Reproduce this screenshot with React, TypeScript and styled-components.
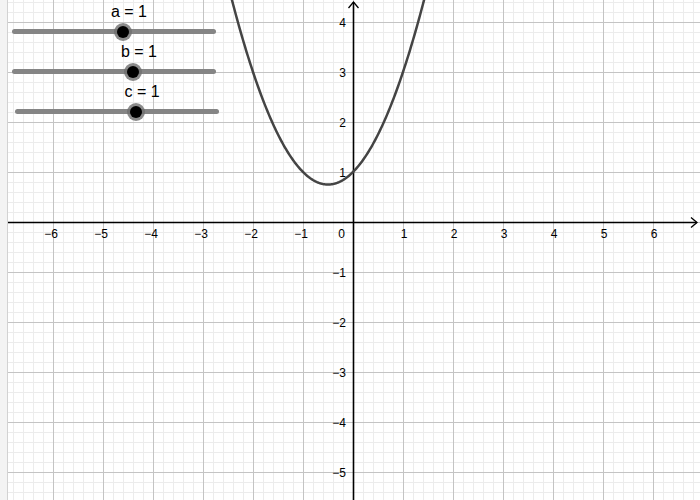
import React from "react";
import styled, { createGlobalStyle } from "styled-components";

// GeoGebra-style graphing view: y = ax² + bx + c with three sliders

const GlobalStyle = createGlobalStyle`
  html, body {
    margin: 0;
    padding: 0;
    background: #ffffff;
    font-family: "Liberation Sans", Arial, sans-serif;
  }
`;

const W = 692;
const H = 500;
const OX = 345;
const OY = 222;
const UNIT = 50;

type SliderDef = { name: string; value: number; knob: number; indent: number };

const sliders: SliderDef[] = [
  { name: "a", value: 1, knob: 111, indent: 0 },
  { name: "b", value: 1, knob: 121, indent: 0 },
  { name: "c", value: 1, knob: 121, indent: 3 },
];

const App: React.FC = () => {
  const minor: number[] = [];
  for (let x = OX % 10; x < W; x += 10) minor.push(x);
  const minorY: number[] = [];
  for (let y = OY % 10; y < H; y += 10) minorY.push(y);
  const majorX: number[] = [];
  for (let x = OX % UNIT; x < W; x += UNIT) majorX.push(x);
  const majorY: number[] = [];
  for (let y = OY % UNIT; y < H; y += UNIT) majorY.push(y);

  // curve points
  const pts: string[] = [];
  for (let t = -2.46; t <= 1.46; t += 0.02) {
    const v = t * t + t + 1;
    pts.push(`${(OX + t * UNIT).toFixed(2)},${(OY - v * UNIT).toFixed(2)}`);
  }

  const xTicks = [-6, -5, -4, -3, -2, -1, 1, 2, 3, 4, 5, 6];
  const yTicks = [4, 3, 2, 1, -1, -2, -3, -4, -5];

  return (
    <>
      <GlobalStyle />
      <Frame>
        <SideStrip />
        <Canvas>
          <Graph width={W} height={H} viewBox={`0 0 ${W} ${H}`}>
            {minor.map((x) => (
              <line key={"mx" + x} x1={x + 0.5} y1={0} x2={x + 0.5} y2={H} stroke="#ececec" strokeWidth={1} />
            ))}
            {minorY.map((y) => (
              <line key={"my" + y} x1={0} y1={y + 0.5} x2={W} y2={y + 0.5} stroke="#ececec" strokeWidth={1} />
            ))}
            {majorX.map((x) => (
              <line key={"Mx" + x} x1={x + 0.5} y1={0} x2={x + 0.5} y2={H} stroke="#c4c4c4" strokeWidth={1} />
            ))}
            {majorY.map((y) => (
              <line key={"My" + y} x1={0} y1={y + 0.5} x2={W} y2={y + 0.5} stroke="#c4c4c4" strokeWidth={1} />
            ))}

            {/* axes */}
            <line x1={0} y1={OY + 0.5} x2={W - 3} y2={OY + 0.5} stroke="#000" strokeWidth={1.6} />
            <polyline points={`${W - 9},${OY - 4.5} ${W - 3},${OY + 0.5} ${W - 9},${OY + 5.5}`} fill="none" stroke="#000" strokeWidth={1.3} />
            <line x1={OX + 0.5} y1={2} x2={OX + 0.5} y2={H} stroke="#000" strokeWidth={1.6} />
            <polyline points={`${OX - 4.5},${8} ${OX + 0.5},${2} ${OX + 5.5},${8}`} fill="none" stroke="#000" strokeWidth={1.3} />

            <g fontFamily="'Liberation Sans', Arial, sans-serif" fontSize={12} fill="#000">
              {xTicks.map((k) => (
                <text key={"xt" + k} x={OX + k * UNIT + (k < 0 ? -2 : 1)} y={OY + 16} textAnchor="middle">
                  {k < 0 ? `\u2212${-k}` : k}
                </text>
              ))}
              <text x={OX - 8} y={OY + 16} textAnchor="end">0</text>
              {yTicks.map((k) => (
                <text key={"yt" + k} x={OX - 7} y={OY - k * UNIT + 5} textAnchor="end">
                  {k < 0 ? `\u2212${-k}` : k}
                </text>
              ))}
            </g>

            <polyline points={pts.join(" ")} fill="none" stroke="#444444" strokeWidth={2.5} strokeLinejoin="round" />
          </Graph>

          <SliderPanel>
            {sliders.map((s) => (
              <SliderRow key={s.name} $indent={s.indent}>
                <Track>
                  <Caption style={{ left: s.knob + 6 }}>
                    {s.name} = {s.value}
                  </Caption>
                  <Knob style={{ left: s.knob }} />
                </Track>
              </SliderRow>
            ))}
          </SliderPanel>
        </Canvas>
      </Frame>
    </>
  );
};

const Frame = styled.div`
  display: flex;
  width: 700px;
  height: 500px;
  overflow: hidden;
  background: #ffffff;
`;

const SideStrip = styled.div`
  width: 7px;
  flex: none;
  background: #f3f3f3;
  border-right: 1px solid #d2d2d2;
`;

const Canvas = styled.div`
  position: relative;
  flex: 1;
  height: 500px;
`;

const Graph = styled.svg`
  display: block;
`;

const SliderPanel = styled.div`
  position: absolute;
  top: 0;
  left: 4px;
  display: flex;
  flex-direction: column;
`;

const SliderRow = styled.div<{ $indent: number }>`
  height: 40px;
  width: 204px;
  margin-left: ${(p) => p.$indent}px;
  display: flex;
  flex-direction: column;
  justify-content: flex-end;
  padding-bottom: 6px;
  box-sizing: border-box;
`;

const Track = styled.div`
  position: relative;
  height: 5px;
  border-radius: 3px;
  background: #858585;
`;

const Caption = styled.div`
  position: absolute;
  bottom: 13px;
  transform: translateX(-50%);
  white-space: nowrap;
  font-size: 16px;
  line-height: 18px;
  color: #000;
`;

const Knob = styled.div`
  position: absolute;
  top: 50%;
  width: 12px;
  height: 12px;
  margin: -6px 0 0 -6px;
  border-radius: 50%;
  background: #000;
  box-shadow: 0 0 0 3px rgba(110, 110, 110, 0.8);
`;

export default App;
